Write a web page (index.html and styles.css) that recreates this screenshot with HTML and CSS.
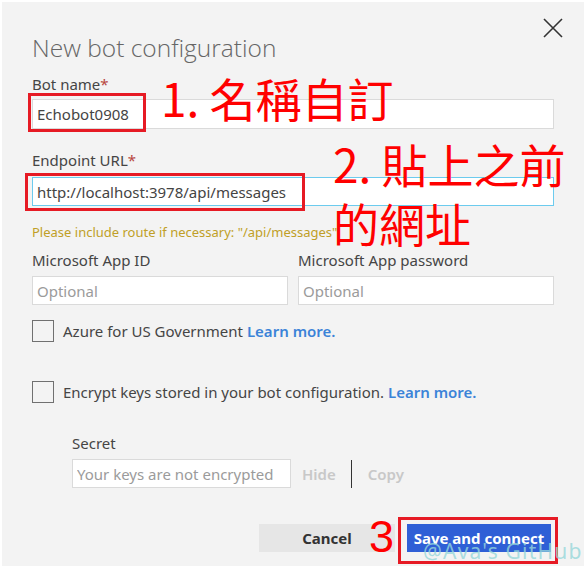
FILE: index.html
```html
<!DOCTYPE html>
<html lang="en">
<head>
<meta charset="utf-8">
<title>New bot configuration</title>
<link rel="stylesheet" href="styles.css">
</head>
<body>
<div class="dialog">
  <button class="close" aria-label="Close">
    <svg width="20" height="20" viewBox="0 0 20 20"><path d="M1 1 L19 19 M19 1 L1 19" stroke="#333" stroke-width="1.6" fill="none"/></svg>
  </button>
  <h1 class="title">New bot configuration</h1>

  <div class="field f-name">
    <label class="lbl">Bot name<span class="req">*</span></label>
    <input class="inp inp-name" type="text" value="Echobot0908">
  </div>

  <div class="field f-endpoint">
    <label class="lbl">Endpoint URL<span class="req">*</span></label>
    <input class="inp inp-endpoint" type="text" value="http://localhost:3978/api/messages">
  </div>
  <div class="hint">Please include route if necessary: "/api/messages"</div>

  <div class="row2">
    <div class="field">
      <label class="lbl">Microsoft App ID</label>
      <input class="inp inp-small" type="text" placeholder="Optional">
    </div>
    <div class="field">
      <label class="lbl">Microsoft App password</label>
      <input class="inp inp-small" type="text" placeholder="Optional">
    </div>
  </div>

  <div class="check-row c1">
    <span class="box"></span>
    <span>Azure for US Government <a class="link">Learn more.</a></span>
  </div>
  <div class="check-row c2">
    <span class="box"></span>
    <span>Encrypt keys stored in your bot configuration. <a class="link">Learn more.</a></span>
  </div>

  <div class="secret">
    <label class="lbl">Secret</label>
    <div class="secret-row">
      <input class="inp inp-secret" type="text" placeholder="Your keys are not encrypted">
      <span class="hide">Hide</span>
      <span class="divider"></span>
      <span class="copy">Copy</span>
    </div>
  </div>

  <div class="actions">
    <button class="btn cancel">Cancel</button>
    <button class="btn save">Save and connect</button>
  </div>

  <div class="mark box-a"></div>
  <div class="mark box-b"></div>
  <div class="mark box-c"></div>
  <div class="note note1">1. 名稱自訂</div>
  <div class="note note2a">2. 貼上之前</div>
  <div class="note note2b">的網址</div>
  <div class="note3">3</div>
  <div class="watermark">@Ava's GitHub</div>
</div>
</body>
</html>
```
FILE: styles.css
```css
html, body {
  margin: 0;
  background: #ffffff;
}
body {
  font-family: "Noto Sans", "Open Sans", sans-serif;
}
.dialog {
  position: relative;
  margin: 2px 0 0 2px;
  width: 582px;
  height: 564px;
  box-sizing: border-box;
  padding: 30px 30px 0 30px;
  background: #f3f3f3;
  color: #454545;
  font-size: 15px;
  line-height: 20px;
}
.close {
  position: absolute;
  left: 541px;
  top: 16px;
  width: 20px;
  height: 20px;
  padding: 0;
  border: 0;
  background: none;
  display: block;
}
.close svg { display: block; }
.title {
  margin: 0;
  font-family: "Open Sans", "Noto Sans", sans-serif;
  font-size: 24.5px;
  font-weight: 300;
  line-height: 32px;
  color: #666666;
}
.lbl { display: block; }
.req { color: #b8463e; }
.inp {
  display: block;
  width: 100%;
  box-sizing: border-box;
  height: 29px;
  margin: 6px 0 0 0;
  padding: 0 4px;
  border: 1px solid #dadada;
  background: #ffffff;
  font: inherit;
  color: #444444;
  outline: none;
}
.inp::placeholder { color: #9b9b9b; opacity: 1; }
.f-name { margin-top: 10px; }
.inp-name { height: 30px; margin-top: 5px; }
.f-endpoint { margin-top: 21px; }
.inp-endpoint { margin-top: 7px; border-color: #6ccbee; }
.hint {
  margin-top: 17px;
  font-size: 13px;
  line-height: 18px;
  color: #c09f27;
}
.row2 {
  margin-top: 9px;
  display: grid;
  grid-template-columns: 1fr 1fr;
  column-gap: 10px;
}
.check-row {
  display: flex;
  align-items: center;
  gap: 9px;
  height: 22px;
}
.c1 { margin-top: 15px; }
.c2 { margin-top: 39px; }
.box {
  width: 22px;
  height: 22px;
  box-sizing: border-box;
  border: 1px solid #707070;
  flex: none;
}
.link {
  color: #3b83d8;
  font-weight: 600;
}
.secret {
  margin: 30px 0 0 40px;
}
.secret-row {
  display: flex;
  align-items: center;
  margin-top: 6px;
}
.inp-secret {
  width: 219px;
  margin: 0;
}
.hide {
  margin-left: 11px;
  color: #c8c8c8;
  font-weight: 600;
}
.divider {
  width: 1px;
  height: 28px;
  background: #333333;
  margin-left: 15px;
}
.copy {
  margin-left: 16px;
  color: #c8c8c8;
  font-weight: 600;
}
.actions {
  margin-top: 36px;
  display: flex;
  justify-content: flex-end;
  gap: 12px;
  padding-right: 3px;
}
.btn {
  height: 28px;
  border: 0;
  padding: 0;
  font: inherit;
  font-weight: 700;
}
.cancel {
  width: 136px;
  background: #e6e6e6;
  color: #333333;
}
.save {
  width: 144px;
  background: #2f5fd6;
  color: #ffffff;
}
.mark {
  position: absolute;
  box-sizing: border-box;
  border: 3px solid #e61a24;
}
.box-a { left: 26px; top: 91px; width: 118px; height: 39px; }
.box-b { left: 23px; top: 171px; width: 280px; height: 38px; }
.box-c { left: 396px; top: 515px; width: 160px; height: 47px; }
.note {
  position: absolute;
  font-family: "Noto Sans CJK TC", "Noto Sans", sans-serif;
  font-size: 46px;
  line-height: 46px;
  color: #ff0000;
  white-space: nowrap;
}
.note1 { left: 159px; top: 72px; }
.note2a { left: 331px; top: 138px; }
.note2b { left: 331px; top: 197px; }
.note3 {
  position: absolute;
  left: 367px;
  top: 512px;
  font-family: "Liberation Sans", sans-serif;
  font-size: 45px;
  line-height: 45px;
  color: #ff0000;
}
.watermark {
  position: absolute;
  left: 421px;
  top: 539px;
  font-family: "Noto Sans", sans-serif;
  font-size: 21px;
  line-height: 21px;
  letter-spacing: 1.2px;
  color: rgba(150, 215, 218, 0.8);
  white-space: nowrap;
}
```
